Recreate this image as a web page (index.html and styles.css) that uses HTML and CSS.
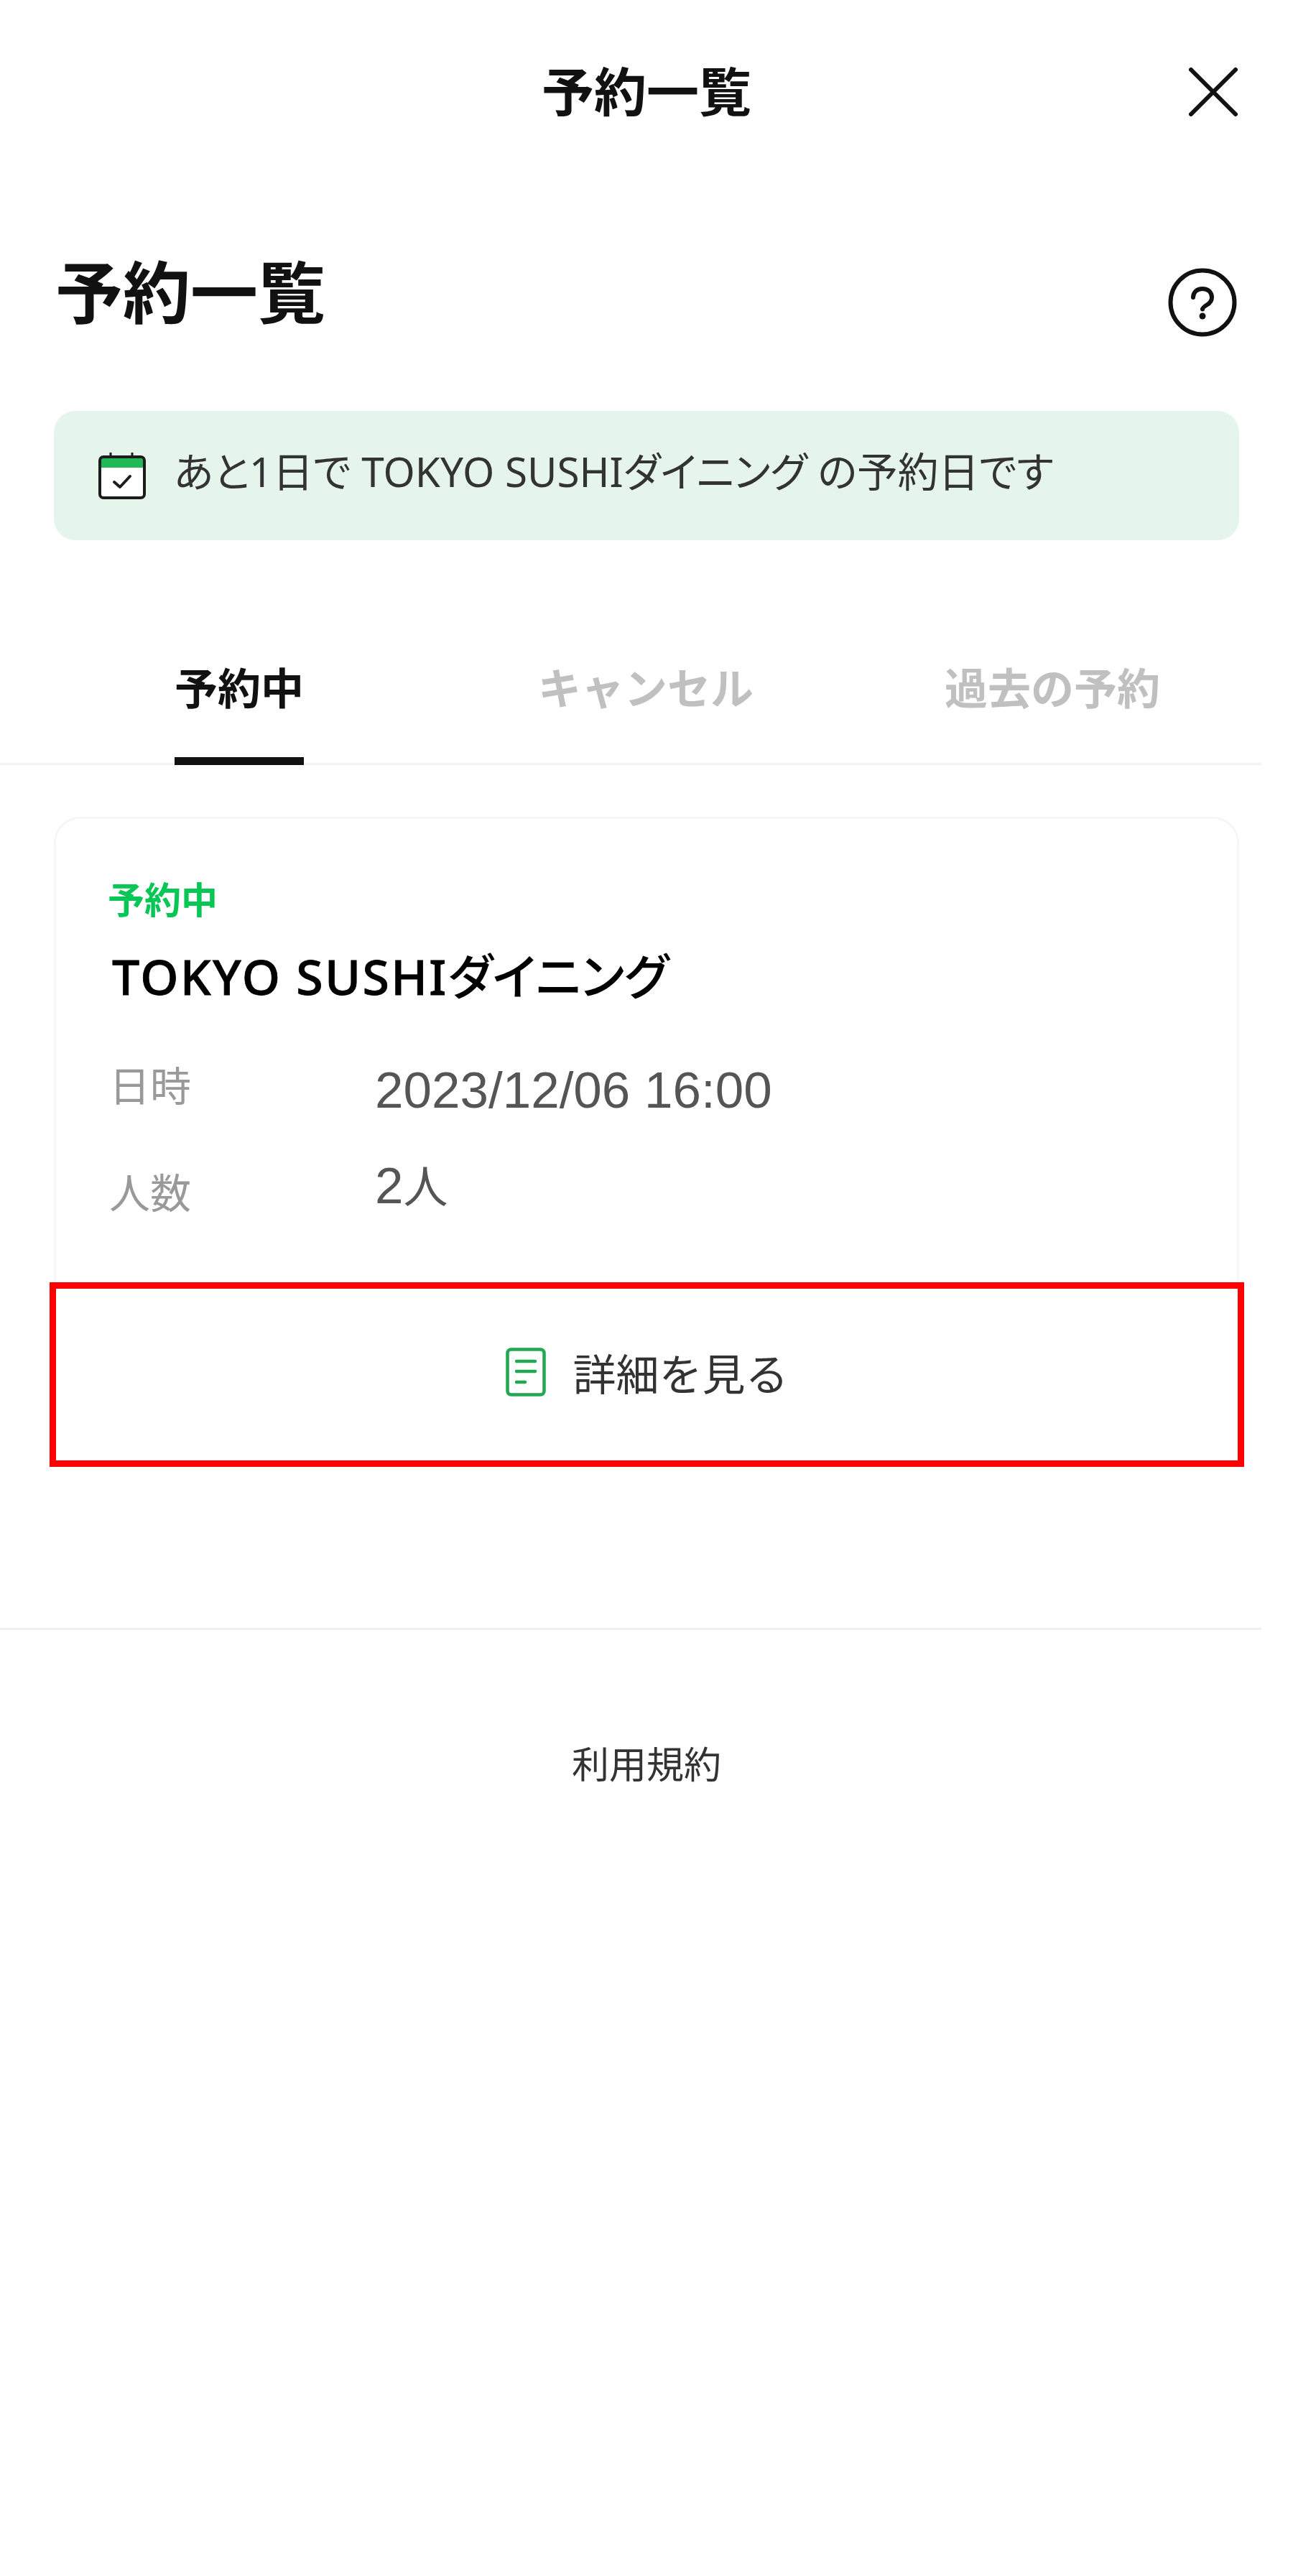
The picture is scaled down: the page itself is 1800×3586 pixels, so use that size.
FILE: index.html
```html
<!doctype html>
<html lang="ja">
    <head>
        <meta charset="UTF-8" />
        <title>予約一覧</title>
        <link rel="stylesheet" href="styles.css">
    </head>
    <body>
        <header class="topbar">
            <span></span>
            <p class="topbar-title">予約一覧</p>
            <svg class="close-icon" viewBox="0 0 68 68" width="68" height="68">
                <path d="M3 3L65 65M65 3L3 65" fill="none" stroke="#111" stroke-width="6" stroke-linecap="round" />
            </svg>
        </header>

        <div class="heading">
            <h1>予約一覧</h1>
            <svg class="help-icon" viewBox="0 0 96 96" width="96" height="96">
                <circle cx="48" cy="48" r="44.5" fill="none" stroke="#111" stroke-width="6" />
                <path d="M35 41c0-7 5-12 13-12s13 5 13 12c0 5-2.500 8-7 10.500-4 2.500-6 4-6 6" fill="none" stroke="#111" stroke-width="6" stroke-linecap="round" />
                <circle cx="48" cy="67" r="4.500" fill="#111" />
            </svg>
        </div>

        <div class="notice">
            <svg class="calendar-icon" viewBox="0 0 66 66" width="66" height="66">
                <rect x="2" y="7" width="62" height="57" rx="5" fill="#fff" />
                <path d="M2 12a5 5 0 0 1 5-5h52a5 5 0 0 1 5 5v10H2z" fill="#22b858" />
                <rect x="2" y="7" width="62" height="57" rx="5" fill="none" stroke="#1c1c1c" stroke-width="4" />
                <path d="M17 1v6M47 1v6" stroke="#1c1c1c" stroke-width="3" />
                <path d="M22 42l8 7 14-15" fill="none" stroke="#1c1c1c" stroke-width="4" stroke-linecap="round" stroke-linejoin="round" />
            </svg>
            <span>あと1日で TOKYO SUSHIダイニング の予約日です</span>
        </div>

        <nav class="tabs">
            <a class="tab active"><span>予約中</span></a>
            <a class="tab"><span>キャンセル</span></a>
            <a class="tab"><span>過去の予約</span></a>
        </nav>

        <section class="card">
            <p class="card-status">予約中</p>
            <h2 class="card-name"><span class="card-name-latin">TOKYO SUSHI</span>ダイニング</h2>
            <div class="row row-date">
                <span class="row-label">日時</span>
                <span class="row-value">2023/12/06 16:00</span>
            </div>
            <div class="row row-people">
                <span class="row-label">人数</span>
                <span class="row-value">2<span class="row-unit">人</span></span>
            </div>
        </section>
        <a class="detail-btn">
            <svg class="doc-icon" viewBox="0 0 56 68" width="56" height="68">
                <rect x="2.500" y="2.500" width="51" height="63" rx="5" fill="none" stroke="#22a850" stroke-width="4.500" />
                <path d="M15 19h26M15 33h26M15 48h12" fill="none" stroke="#22a850" stroke-width="4.500" stroke-linecap="round" />
            </svg>
            <span>詳細を見る</span>
        </a>

        <footer class="footer">
            <a>利用規約</a>
        </footer>
    </body>
</html>
```

FILE: styles.css
```css
body {
    margin: 0;
    background-color: #fff;
    color: #111;
    font-family: "Noto Sans CJK JP", "Noto Sans", sans-serif;
}
p,
h1,
h2 {
    margin: 0;
}
svg {
    display: block;
    flex-shrink: 0;
}
.topbar {
    height: 256px;
    display: grid;
    grid-template-columns: 1fr auto 1fr;
    align-items: center;
    padding: 0 77px;
}
.topbar-title {
    font-size: 73px;
    font-weight: 700;
    line-height: 1;
    margin-top: -10px;
}
.close-icon {
    justify-self: end;
}
.heading {
    height: 316px;
    display: flex;
    justify-content: space-between;
    align-items: center;
    padding: 0 78px 0 77px;
}
h1 {
    font-size: 94px;
    font-weight: 700;
    line-height: 1;
    margin-top: -24px;
}
.help-icon {
    margin-top: 14px;
}
.notice {
    margin: 0 75px;
    height: 180px;
    display: flex;
    align-items: center;
    gap: 39px;
    padding-left: 62px;
    background-color: #e5f5ec;
    border-radius: 30px;
    font-family: "Noto Sans", "Noto Sans CJK JP", sans-serif;
    font-feature-settings: "palt";
    font-size: 56.7px;
    color: #333;
}
.notice span {
    margin-top: -17px;
}
.tabs {
    margin-top: 130px;
    width: 1756px;
    height: 183px;
    box-sizing: border-box;
    padding-left: 50px;
    display: grid;
    grid-template-columns: repeat(3, 566px);
    border-bottom: 3px solid #f2f2f2;
}
.tab {
    display: flex;
    justify-content: center;
    font-size: 60px;
    font-weight: 700;
    color: #c0c0c0;
}
.tab span {
    height: 183px;
    box-sizing: border-box;
    padding-top: 33px;
    line-height: 80px;
}
.tab.active {
    color: #111;
}
.tab.active span {
    border-bottom: 11px solid #111;
}
.card {
    margin: 72px 75px 0;
    height: 648px;
    box-sizing: border-box;
    padding: 80px 0 0 76px;
    border: 3px solid #f6f6f6;
    border-bottom: none;
    border-radius: 36px 36px 0 0;
}
.card-status {
    margin-left: -4px;
    font-size: 51px;
    font-weight: 700;
    line-height: 60px;
    color: #06c755;
}
.card-name {
    margin-top: 39px;
    font-family: "Noto Sans", "Noto Sans CJK JP", sans-serif;
    font-feature-settings: "palt";
    font-size: 68px;
    font-weight: 500;
    line-height: 80px;
    color: #000;
}
.card-name-latin {
    margin-left: 2px;
    letter-spacing: 2.3px;
    -webkit-text-stroke: 0.8px #000;
}
.row {
    display: grid;
    grid-template-columns: 370px 1fr;
    align-items: center;
}
.row-date {
    margin-top: 69px;
}
.row-date .row-label {
    margin-bottom: 20px;
}
.row-people {
    margin-top: 39px;
}
.row-people .row-label {
    margin-top: 10px;
}
.row-people .row-value {
    margin-bottom: 6px;
}
.row-label {
    margin-left: -2px;
    font-size: 57px;
    line-height: 80px;
    color: #999;
}
.row-value {
    margin-left: -2px;
    font-family: "Liberation Sans", "Noto Sans CJK JP", sans-serif;
    font-size: 71px;
    line-height: 80px;
    color: #555;
}
.row-unit {
    font-family: "Noto Sans CJK JP", sans-serif;
    font-size: 62px;
}
.detail-btn {
    margin: 0 68px 0 69px;
    height: 257px;
    box-sizing: border-box;
    border: 9px solid #f00;
    padding-bottom: 8px;
    display: flex;
    justify-content: center;
    align-items: center;
    gap: 38px;
    font-size: 60px;
    color: #333;
}
.footer {
    margin-top: 224px;
    width: 1756px;
    box-sizing: border-box;
    border-top: 3px solid #efefef;
    padding: 145px 0 0 44px;
    text-align: center;
    font-size: 52px;
    line-height: 80px;
    color: #333;
}
```
